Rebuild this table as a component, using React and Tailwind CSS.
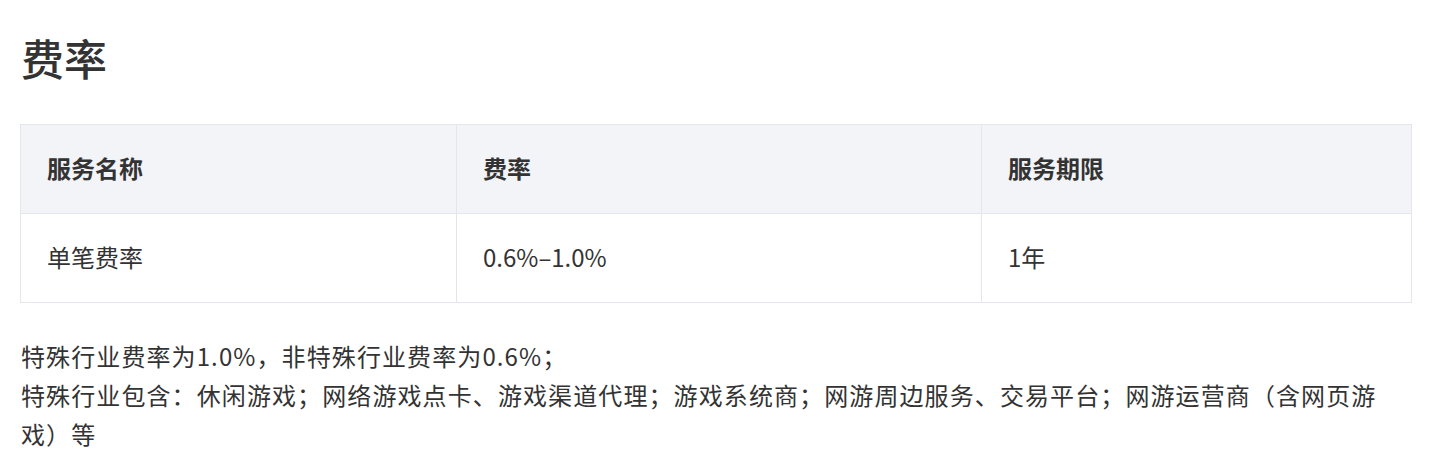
import React from 'react'

const COLUMNS = [
  { key: 'name', title: '服务名称', width: 'w-[435px]' },
  { key: 'rate', title: '费率', width: 'w-[525px]' },
  { key: 'term', title: '服务期限', width: 'flex-1' },
]

const ROWS = [{ name: '单笔费率', rate: '0.6%–1.0%', term: '1年' }]

export default function App() {
  return (
    <div className="bg-white min-h-[476px] px-[20px] pt-[28px] text-[#333] font-['Noto_Sans_CJK_SC','Noto_Sans',sans-serif]">
      <h1 className="text-[43px] leading-[58px] font-medium text-[#333] pl-[1px]">费率</h1>

      {/* rate table */}
      <div className="mt-[38px] w-[1392px] border border-[#e5e6eb]">
        <div className="flex bg-[#f3f4f7] h-[89px] border-b border-[#e5e6eb]">
          {COLUMNS.map((c, i) => (
            <div
              key={c.key}
              className={`${c.width} flex items-center pl-[26px] pb-[2px] text-[24px] font-semibold ${
                i > 0 ? 'border-l border-[#e5e6eb]' : ''
              }`}
            >
              {c.title}
            </div>
          ))}
        </div>
        {ROWS.map((r) => (
          <div key={r.name} className="flex h-[88px]">
            {COLUMNS.map((c, i) => (
              <div
                key={c.key}
                className={`${c.width} flex items-center pl-[26px] pb-[2px] text-[24px] ${
                  i > 0 ? 'border-l border-[#e5e6eb]' : ''
                }`}
              >
                {r[c.key]}
              </div>
            ))}
          </div>
        ))}
      </div>

      <div className="mt-[33px] w-[1380px] pl-[1px] text-[24px] leading-[39px] tracking-[1.1px] text-[#333]">
        <p>特殊行业费率为1.0%，非特殊行业费率为0.6%；</p>
        <p>特殊行业包含：休闲游戏；网络游戏点卡、游戏渠道代理；游戏系统商；网游周边服务、交易平台；网游运营商（含网页游戏）等</p>
      </div>
    </div>
  )
}
